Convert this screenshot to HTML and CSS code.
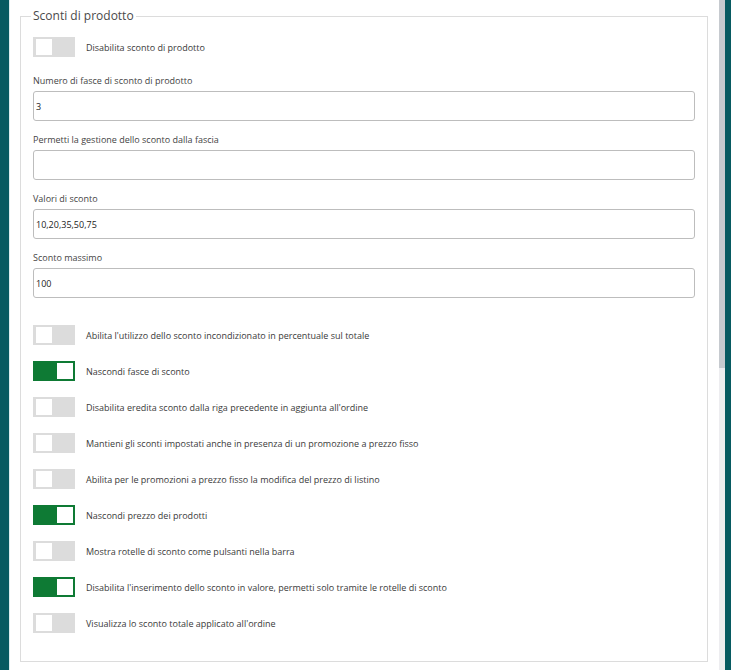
FILE: index.html
```html
<!DOCTYPE html>
<html lang="it">
<head>
    <meta charset="UTF-8">
    <meta name="viewport" content="width=device-width, initial-scale=1.0">
    <title>Sconti di prodotto</title>
    <link rel="stylesheet" href="styles.css">
</head>
<body>
    <div class="panel">
        <div class="panel-inner">
            <fieldset class="group">
                <legend>Sconti di prodotto</legend>

                <div class="switch-row first">
                    <label class="toggle"><input type="checkbox"><span class="slider"></span></label>
                    <span class="switch-text">Disabilita sconto di prodotto</span>
                </div>

                <div class="field">
                    <label class="field-label">Numero di fasce di sconto di prodotto</label>
                    <input class="text-input" type="text" value="3">
                </div>
                <div class="field">
                    <label class="field-label">Permetti la gestione dello sconto dalla fascia</label>
                    <input class="text-input" type="text" value="">
                </div>
                <div class="field">
                    <label class="field-label">Valori di sconto</label>
                    <input class="text-input" type="text" value="10,20,35,50,75">
                </div>
                <div class="field">
                    <label class="field-label">Sconto massimo</label>
                    <input class="text-input" type="text" value="100">
                </div>

                <div class="switch-list">
                    <div class="switch-row">
                        <label class="toggle"><input type="checkbox"><span class="slider"></span></label>
                        <span class="switch-text">Abilita l'utilizzo dello sconto incondizionato in percentuale sul totale</span>
                    </div>
                    <div class="switch-row">
                        <label class="toggle"><input type="checkbox" checked><span class="slider"></span></label>
                        <span class="switch-text">Nascondi fasce di sconto</span>
                    </div>
                    <div class="switch-row">
                        <label class="toggle"><input type="checkbox"><span class="slider"></span></label>
                        <span class="switch-text">Disabilita eredita sconto dalla riga precedente in aggiunta all'ordine</span>
                    </div>
                    <div class="switch-row">
                        <label class="toggle"><input type="checkbox"><span class="slider"></span></label>
                        <span class="switch-text">Mantieni gli sconti impostati anche in presenza di un promozione a prezzo fisso</span>
                    </div>
                    <div class="switch-row">
                        <label class="toggle"><input type="checkbox"><span class="slider"></span></label>
                        <span class="switch-text">Abilita per le promozioni a prezzo fisso la modifica del prezzo di listino</span>
                    </div>
                    <div class="switch-row">
                        <label class="toggle"><input type="checkbox" checked><span class="slider"></span></label>
                        <span class="switch-text">Nascondi prezzo dei prodotti</span>
                    </div>
                    <div class="switch-row">
                        <label class="toggle"><input type="checkbox"><span class="slider"></span></label>
                        <span class="switch-text">Mostra rotelle di sconto come pulsanti nella barra</span>
                    </div>
                    <div class="switch-row">
                        <label class="toggle"><input type="checkbox" checked><span class="slider"></span></label>
                        <span class="switch-text">Disabilita l'inserimento dello sconto in valore, permetti solo tramite le rotelle di sconto</span>
                    </div>
                    <div class="switch-row">
                        <label class="toggle"><input type="checkbox"><span class="slider"></span></label>
                        <span class="switch-text">Visualizza lo sconto totale applicato all'ordine</span>
                    </div>
                </div>
            </fieldset>
        </div>
        <!-- barra di scorrimento -->
        <div class="scrollbar">
            <div class="scroll-thumb"></div>
        </div>
    </div>
</body>
</html>
```

FILE: styles.css
```css
html, body {
    height: 100%;
}
body {
    margin: 0;
    background-color: #075a61;
    font-family: "Open Sans", "Liberation Sans", sans-serif;
    color: #3a3a3a;
    overflow: hidden;
}
.panel {
    display: flex;
    height: 100%;
    margin-left: 9px;
    margin-right: 6px;
    background-color: #fff;
    border-left: 1px solid #dcecee;
    overflow: hidden;
}
.panel-inner {
    flex: 1;
    padding: 8px 11px 0 10px;
}
.scrollbar {
    width: 6px;
    flex-shrink: 0;
    background-color: #ededf0;
}
.scroll-thumb {
    height: 368px;
    background-color: #c6cacf;
}
.group {
    margin: 0;
    padding: 13px 12px 28px 12px;
    border: 1px solid #dcdcdc;
}
.group legend {
    padding: 0 2px;
    margin-left: -2px;
    font-size: 12px;
    line-height: 16px;
    color: #4a4a4a;
}
.switch-row {
    display: flex;
    align-items: center;
    height: 20px;
    margin-bottom: 16px;
}
.switch-row.first {
    margin-bottom: 17px;
}
.switch-list {
    margin-top: 27px;
}
.switch-list .switch-row:last-child {
    margin-bottom: 0;
}
.switch-text {
    margin-left: 11px;
    font-size: 9px;
    color: #3a3a3a;
}
.toggle {
    position: relative;
    display: block;
    width: 42px;
    height: 20px;
    flex-shrink: 0;
}
.toggle input {
    display: none;
}
.slider {
    position: absolute;
    inset: 0;
    background-color: #dcdcdc;
}
.slider::before {
    content: "";
    position: absolute;
    left: 3px;
    top: 2px;
    width: 16px;
    height: 16px;
    background-color: #fff;
}
.toggle input:checked + .slider {
    background-color: #0e7a34;
}
.toggle input:checked + .slider::before {
    left: 24px;
}
.field {
    margin-bottom: 12px;
}
.field-label {
    display: block;
    font-size: 9px;
    line-height: 14px;
    margin-bottom: 3px;
    color: #444;
}
.text-input {
    display: block;
    box-sizing: border-box;
    width: 100%;
    height: 30px;
    margin: 0;
    padding: 0 2px;
    border: 1px solid #bdbdbd;
    border-radius: 3px;
    font-family: "Open Sans", "Liberation Sans", sans-serif;
    font-size: 9px;
    color: #222;
    background-color: #fff;
    outline: none;
}
```
